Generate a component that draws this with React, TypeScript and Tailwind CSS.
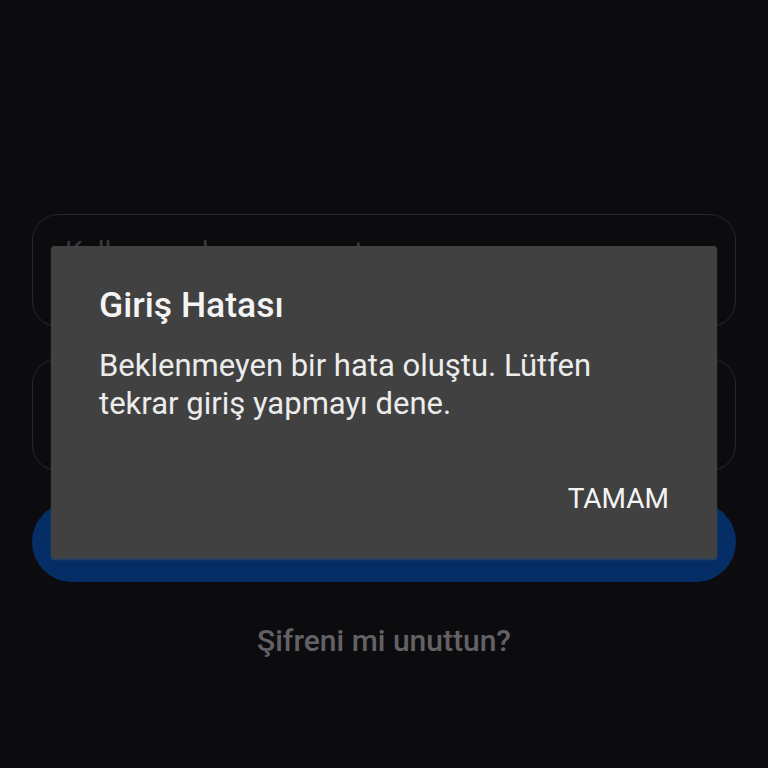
const font = { fontFamily: 'Roboto, "Liberation Sans", sans-serif' }

const App = () => {
  return (
    <div
      className="relative w-[768px] h-[768px] overflow-hidden bg-[#0c0c0e]"
      style={font}
    >
      <div className="flex flex-col px-8 pt-[214px]">
        <div className="h-[113px] rounded-[26px] border-[1.5px] border-[#262629] px-8 pt-[19px]">
          <p className="text-[28px] leading-[36px] text-[#3a3a3d]">
            Kullanıcı adı veya e-posta
          </p>
        </div>

        <div className="mt-[31px] h-[113px] rounded-[26px] border-[1.5px] border-[#262629] px-8 pt-[19px]">
          <p className="text-[28px] leading-[36px] text-[#3a3a3d]">Şifre</p>
        </div>

        <button className="mt-[31px] h-[80px] rounded-full bg-[#062e66] text-[28px] font-medium text-[#8a8a8a]">
          Giriş Yap
        </button>

        <p className="mt-[41px] text-center text-[30px] leading-[36px] font-medium text-[#626265]">
          Şifreni mi unuttun?
        </p>
      </div>

      {/* error dialog */}
      <div className="absolute left-[51px] top-[246px] w-[666px] h-[312px] rounded-[3px] bg-[#414141] px-12 pt-[38px] pb-[40px] flex flex-col shadow-[0_2px_2px_rgba(90,90,90,0.5)]">
        <h2 className="text-[35.5px] leading-[42px] font-medium text-[#f4f4f4]">
          Giriş Hatası
        </h2>
        <p className="mt-[21px] text-[31px] leading-[38px] text-[#ececec]">
          Beklenmeyen bir hata oluştu. Lütfen tekrar giriş yapmayı dene.
        </p>
        <div className="mt-auto flex justify-end">
          <span className="text-[28px] leading-[38px] text-[#f4f4f4]">
            TAMAM
          </span>
        </div>
      </div>
    </div>
  )
}

export default App
